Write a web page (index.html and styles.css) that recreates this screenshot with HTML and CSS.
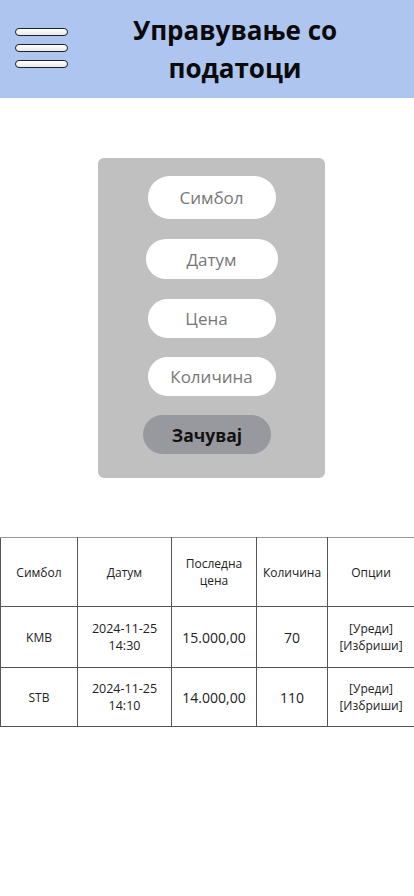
FILE: index.html
```html
<!DOCTYPE html>
<html lang="mk">
<head>
<meta charset="utf-8">
<link rel="stylesheet" href="styles.css">
</head>
<body>
<header class="header">
  <div class="burger">
    <span class="bar"></span>
    <span class="bar"></span>
    <span class="bar"></span>
  </div>
  <h1 class="title">Управување со<br>податоци</h1>
</header>
<main>
  <section class="card">
    <div class="field f1">Симбол</div>
    <div class="field f2">Датум</div>
    <div class="field f3">Цена</div>
    <div class="field f4">Количина</div>
    <div class="save">Зачувај</div>
  </section>
  <table class="grid">
    <colgroup>
      <col class="c1"><col class="c2"><col class="c3"><col class="c4"><col class="c5">
    </colgroup>
    <tr class="head">
      <td>Симбол</td><td>Датум</td><td>Последна<br>цена</td><td>Количина</td><td>Опции</td>
    </tr>
    <tr class="r1">
      <td>KMB</td><td class="date">2024-11-25<br>14:30</td><td class="num">15.000,00</td><td class="num">70</td><td>[Уреди]<br>[Избриши]</td>
    </tr>
    <tr class="r2">
      <td>STB</td><td class="date">2024-11-25<br>14:10</td><td class="num">14.000,00</td><td class="num">110</td><td>[Уреди]<br>[Избриши]</td>
    </tr>
  </table>
</main>
</body>
</html>
```
FILE: styles.css
```css
* { box-sizing: border-box; }
html, body { margin: 0; padding: 0; background: #fff; }
body { font-family: "Open Sans", "Noto Sans", sans-serif; color: #111; width: 414px; }

.header {
  height: 98px;
  background: #aec5f0;
  display: flex;
  align-items: center;
  position: relative;
}
.burger {
  position: absolute;
  left: 15px;
  top: 28px;
  display: flex;
  flex-direction: column;
  gap: 8px;
}
.bar {
  display: block;
  width: 53px;
  height: 8px;
  border: 1.5px solid #222;
  border-radius: 5px;
  background: linear-gradient(#ffffff, #e9e9ee);
}
.title {
  margin: 0 0 0 56px;
  flex: 1;
  text-align: center;
  font-size: 26px;
  font-weight: 700;
  line-height: 38px;
  color: #0a0a0a;
}

.card {
  margin: 60px 0 0 98px;
  width: 227px;
  height: 320px;
  background: #c0c0c0;
  border-radius: 6px;
  display: flex;
  flex-direction: column;
  align-items: center;
  padding-top: 18px;
}
.field {
  background: #fff;
  border-radius: 22px;
  display: flex;
  align-items: center;
  justify-content: center;
  font-size: 17px;
  color: #777;
}
.f1 { width: 128px; height: 43px; }
.f2 { width: 132px; height: 40px; margin-top: 20px; }
.f3 { width: 128px; height: 39px; margin-top: 20px; padding-right: 10px; }
.f4 { width: 128px; height: 39px; margin-top: 19px; }
.save {
  width: 128px; height: 39px; margin-top: 19px;
  margin-right: 9px;
  background: #98989f;
  border-radius: 20px;
  display: flex;
  align-items: center;
  justify-content: center;
  font-size: 17.5px;
  font-weight: 700;
  color: #111;
}

.grid {
  margin-top: 59px;
  width: 414px;
  border-collapse: collapse;
  table-layout: fixed;
  font-size: 12px;
  color: #222;
}
.grid td {
  border: 1px solid #555;
  text-align: center;
  vertical-align: middle;
  padding: 0;
  line-height: 17px;
}
.grid tr.head td { border-top-color: #999; }
.c1 { width: 77px; }
.c2 { width: 94px; }
.c3 { width: 85px; }
.c4 { width: 71px; }
.c5 { width: 87px; }
.head { height: 69px; }
.r1 { height: 61px; }
.r2 { height: 59px; }
.grid td.date { font-size: 12.5px; }
.grid td.num { font-size: 14px; }
```
